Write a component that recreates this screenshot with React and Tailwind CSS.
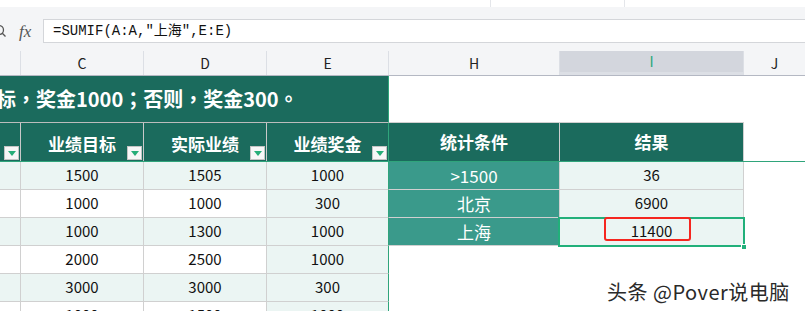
import React from "react";

const rows = [
  ["1500", "1505", "1000"],
  ["1000", "1000", "300"],
  ["1000", "1300", "1000"],
  ["2000", "2500", "1000"],
  ["3000", "3000", "300"],
  ["1000", "1500", "1000"],
];

const stats = [
  [">1500", "36"],
  ["北京", "6900"],
  ["上海", "11400"],
];

function Dropdown() {
  return (
    <span className="absolute right-[1px] bottom-[1px] w-[15px] h-[14px] bg-[#f7f7f7] border border-[#c4c4c4] flex items-center justify-center">
      <svg width="8" height="5" viewBox="0 0 8 5">
        <path d="M0 0 H8 L4 5 Z" fill="#27ad78" />
      </svg>
    </span>
  );
}

function ColHead({ w, label, active, last }) {
  return (
    <div
      className={`${w} h-full flex items-center justify-center text-[14px] ${
        active ? "bg-[#d3d6dd] text-[#1fa77a] border-b-[3px] border-[#21b07a]" : "text-[#222]"
      } ${last ? "" : "border-r border-[#dcdfe5]"}`}
    >
      {label}
    </div>
  );
}

export default function App() {
  return (
    <div className="w-[805px] h-[311px] overflow-hidden bg-white relative font-['Noto_Sans_CJK_SC',sans-serif]">
      {/* toolbar remnant */}
      <div className="h-[7px] flex">
        <div className="w-[490px]" />
        <div className="w-[134px] border-l border-[#e4e6ea]" />
        <div className="flex-1 border-l border-[#e4e6ea]" />
      </div>

      {/* formula bar */}
      <div className="h-[44px] bg-[#f4f5f7] pt-[12px] flex">
        <div className="w-[43px] h-[24px] flex items-center">
          <svg width="14" height="14" viewBox="0 0 14 14" className="ml-[-7px]">
            <circle cx="6" cy="6" r="4.5" fill="none" stroke="#555" strokeWidth="1.3" />
            <path d="M9.3 9.3 L12.5 12.5" stroke="#555" strokeWidth="1.3" />
          </svg>
          <span className="ml-[12px] italic text-[17px] text-[#555] font-['Liberation_Serif',serif] leading-none">fx</span>
        </div>
        <div className="flex-1 h-[24px] bg-white border border-r-0 border-[#d4d6da] flex items-center pl-[9px] text-[14px] text-[#111] font-['Liberation_Mono','Noto_Sans_CJK_SC',monospace]">
          =SUMIF(A:A,"上海",E:E)
        </div>
      </div>

      {/* column letters */}
      <div className="h-[25px] bg-[#f4f5f7] border-b border-[#b4b8c3] flex">
        <ColHead w="w-[21px]" label="" />
        <ColHead w="w-[123px]" label="C" />
        <ColHead w="w-[123px]" label="D" />
        <ColHead w="w-[122px]" label="E" />
        <ColHead w="w-[171px]" label="H" />
        <ColHead w="w-[184px]" label="I" active />
        <ColHead w="flex-1" label="J" last />
      </div>

      {/* title row */}
      <div className="h-[47px] flex">
        <div className="w-[389px] bg-[#1b6b5d] border-r border-[#2fa57b] border-b border-b-[#bcbcbc] flex items-center overflow-hidden">
          <span className="ml-[-4px] whitespace-nowrap text-white text-[20px] font-bold font-['Noto_Sans_CJK_TC',sans-serif]">
            标，奖金1000；否则，奖金300。
          </span>
        </div>
        <div className="w-[355px] border-b border-[#d0d0d0]" />
        <div className="flex-1" />
      </div>

      {/* table header row */}
      <div className="h-[39px] flex border-b border-[#2fa57b]">
        {[
          ["w-[21px]", ""],
          ["w-[123px]", "业绩目标"],
          ["w-[123px]", "实际业绩"],
          ["w-[122px]", "业绩奖金"],
        ].map(([w, t], i) => (
          <div
            key={i}
            className={`${w} relative bg-[#1b6b5d] flex items-center justify-center pt-[3px] text-white text-[17px] font-bold ${
              i === 3 ? "border-r border-[#2fa57b]" : "border-r border-[#c9c9c9]"
            }`}
          >
            {t}
            <Dropdown />
          </div>
        ))}
        <div className="w-[171px] bg-[#1b6b5d] border-r border-[#cfcfcf] flex items-center justify-center text-white text-[17px] font-bold">
          统计条件
        </div>
        <div className="w-[184px] bg-[#1b6b5d] border-r border-[#cfcfcf] flex items-center justify-center text-white text-[17px] font-bold">
          结果
        </div>
        <div className="flex-1" />
      </div>

      {/* data rows */}
      {rows.map((r, i) => {
        const light = i % 2 === 0 ? "bg-[#ebf5f3]" : "bg-white";
        const cell = "h-full flex items-center justify-center border-r border-b border-[#d0d0d0] text-[15px] text-[#111]";
        const stat = stats[i];
        return (
          <div key={i} className="h-[28px] flex">
            <div className={`w-[21px] ${cell} ${light}`} />
            <div className={`w-[123px] ${cell} ${light}`}>{r[0]}</div>
            <div className={`w-[123px] ${cell} ${light}`}>{r[1]}</div>
            <div className="w-[122px] h-full flex items-center justify-center border-r border-r-[#2fa57b] border-b border-[#d0d0d0] bg-[#ebf5f3] text-[15px] text-[#111]">
              {r[2]}
            </div>
            {stat ? (
              <>
                <div className="w-[171px] h-full flex items-center justify-center bg-[#3a9a8b] border-r border-b border-[#d0d0d0] text-white text-[17px]">
                  {stat[0]}
                </div>
                <div className="w-[184px] h-full relative flex items-center justify-center bg-[#ebf5f3] border-r border-b border-[#d0d0d0] text-[15px] text-[#111]">
                  {stat[1]}
                  {i === 2 && (
                    <>
                      <span className="absolute left-[-2px] top-[-1px] right-[-2px] bottom-[-2px] border-2 border-[#21b07a]" />
                      <span className="absolute right-[-4px] bottom-[-5px] w-[6px] h-[6px] bg-[#21b07a] border border-white" />
                      <span className="absolute left-[44px] top-[-1px] w-[87px] h-[24px] border-[2.5px] border-[#f5261f] rounded-[3px]" />
                    </>
                  )}
                </div>
              </>
            ) : (
              <div className="w-[355px]" />
            )}
            <div className="flex-1" />
          </div>
        );
      })}

      {/* watermark */}
      <div className="absolute left-[607px] top-[280px] text-[20px] tracking-[0.5px] leading-[24px] text-[#2a2a2a] whitespace-nowrap [text-shadow:0_0_2px_#fff,0_0_2px_#fff]">
        头条 @Pover说电脑
      </div>
    </div>
  );
}
